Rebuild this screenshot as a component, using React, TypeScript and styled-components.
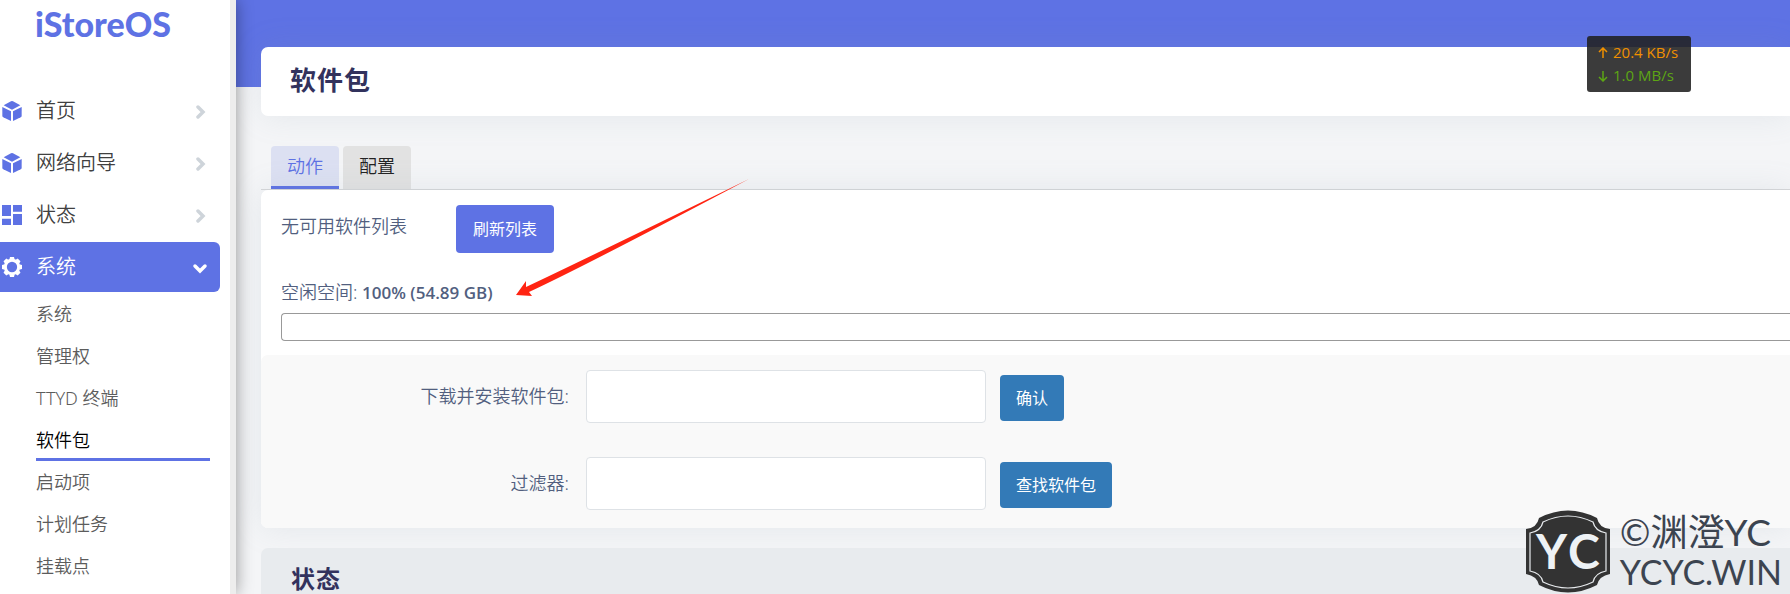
import React from "react";
import styled, { createGlobalStyle } from "styled-components";

const primary = "#5e72e4";

const GlobalStyle = createGlobalStyle`
  *, *::before, *::after { box-sizing: border-box; }
  body {
    margin: 0;
    background: #f4f5f7;
    color: #525f7f;
    font-family: "Noto Sans", "Noto Sans CJK SC", sans-serif;
    font-size: 18px;
    font-weight: 350;
    line-height: 24px;
  }
  h1, h2, p, ul { margin: 0; padding: 0; }
  ul { list-style: none; }
  a { color: inherit; text-decoration: none; }
  button, input { font: inherit; }
`;

const Page = styled.div`
  position: relative;
  display: flex;
  height: 100vh;
  overflow: hidden;
`;

const Sidebar = styled.aside`
  position: relative;
  z-index: 1;
  flex: 0 0 236px;
  padding-right: 10px;
  background: #fff;
  border-right: 6px solid #ededed;
  box-shadow: 0 0 16px rgba(0, 0, 0, 0.4);
`;

const Brand = styled.a`
  display: block;
  height: 86px;
  padding: 4px 0 0 35px;
  color: ${primary};
  font-family: Lato, sans-serif;
  font-size: 34px;
  font-weight: 900;
  line-height: 40px;
`;

const Menu = styled.ul`
  display: flex;
  flex-direction: column;
  gap: 2px;
`;

const MenuLink = styled.a<{ $active?: boolean }>`
  display: flex;
  align-items: center;
  height: 50px;
  padding: 0 12px 0 2px;
  border-radius: 0 6px 6px 0;
  background: ${(p) => (p.$active ? primary : "transparent")};
  color: ${(p) => (p.$active ? "#fff" : "#404040")};
  font-size: 20px;

  > svg:first-child {
    margin-right: 14px;
    color: ${(p) => (p.$active ? "#fff" : primary)};
  }
  > svg:last-child {
    margin-left: auto;
    color: ${(p) => (p.$active ? "#fff" : "#ced4da")};
  }
`;

const SubMenu = styled.ul`
  padding: 1px 10px 0 36px;
`;

const SubLink = styled.a<{ $active?: boolean }>`
  display: block;
  height: 42px;
  padding-top: 9px;
  border-bottom: 3px solid ${(p) => (p.$active ? primary : "transparent")};
  color: ${(p) => (p.$active ? "#000" : "#5c5c5c")};
`;

const Main = styled.main`
  flex: 1;
  min-width: 0;
  display: flex;
  flex-direction: column;
  padding: 47px 0 0 25px;
  background: linear-gradient(${primary} 87px, #f4f5f7 87px);

  > * { flex-shrink: 0; }
`;

const TitleCard = styled.header`
  height: 69px;
  padding: 16px 29px;
  border-radius: 7px 0 0 7px;
  background: #fff;
  box-shadow: 0 0 32px rgba(136, 152, 170, 0.15);
`;

const Title = styled.h1`
  color: #32325d;
  font-size: 26px;
  font-weight: 700;
  line-height: 34px;
  letter-spacing: 1px;
`;

const Tabs = styled.ul`
  display: flex;
  gap: 4px;
  margin-top: 30px;
  padding-left: 10px;
  border-bottom: 1px solid #d6d7d9;
`;

const TabLink = styled.a<{ $active?: boolean }>`
  display: block;
  height: 43px;
  padding: 8px 16px 0;
  border-radius: 4px 4px 0 0;
  border-bottom: 3px solid ${(p) => (p.$active ? primary : "#e2e2e2")};
  background: ${(p) => (p.$active ? "#dce0f2" : "#e2e2e2")};
  color: ${(p) => (p.$active ? primary : "#222")};
`;

const Panel = styled.section`
  border-radius: 7px 0 0 7px;
  background: #fff;
  box-shadow: 0 0 32px rgba(136, 152, 170, 0.15);
`;

const Overview = styled.div`
  padding: 15px 0 14px 20px;
`;

const ListRow = styled.div`
  display: flex;
  gap: 49px;
  margin-bottom: 27px;

  p { padding-top: 9px; }
`;

const Button = styled.button<{ $tone?: "primary" | "info" }>`
  height: ${(p) => (p.$tone === "info" ? 46 : 48)}px;
  padding: 0 ${(p) => (p.$tone === "info" ? 16 : 17)}px;
  border: 0;
  border-radius: 4px;
  background: ${(p) => (p.$tone === "info" ? "#337ab7" : primary)};
  color: #fff;
  font-size: 16px;
  font-weight: 400;
`;

const FreeSpace = styled.p`
  margin-bottom: 8px;

  strong {
    font-family: "Open Sans", sans-serif;
    font-size: 17px;
    font-weight: 600;
  }
`;

const Meter = styled.div`
  height: 28px;
  border: 1px solid #999;
  border-right: 0;
  border-radius: 4px 0 0 4px;
`;

const Form = styled.form`
  display: grid;
  gap: 34px;
  padding: 15px 0 18px;
  border-radius: 7px 0 0 7px;
  background: #f9f9f9;
`;

const Field = styled.div`
  display: grid;
  grid-template-columns: 308px 400px auto;
  justify-content: start;
  align-items: center;

  label {
    padding-bottom: 2px;
    text-align: right;
  }
  input {
    width: 400px;
    height: 53px;
    margin-left: 17px;
    padding: 0 12px;
    border: 1px solid #dee2e6;
    border-radius: 4px;
    background: #fff;
    color: inherit;
  }
  ${Button} {
    margin: 3px 0 0 31px;
  }
`;

const StatusSection = styled.section`
  flex-grow: 1;
  margin-top: 20px;
  padding: 17px 30px 0;
  border-radius: 7px 0 0 0;
  background: #e8ebee;

  h2 {
    color: #32325d;
    font-size: 24px;
    font-weight: 700;
    line-height: 28px;
    letter-spacing: 1px;
  }
`;

const SpeedBox = styled.div`
  position: absolute;
  z-index: 2;
  top: 36px;
  right: 99px;
  width: 104px;
  padding: 5px 10px;
  border-radius: 3px;
  background: rgba(32, 32, 32, 0.88);
  font-family: "Open Sans", sans-serif;
  font-size: 15px;
  font-weight: 400;
  line-height: 23px;
`;

const Speed = styled.div<{ $color: string }>`
  display: flex;
  align-items: center;
  gap: 4px;
  color: ${(p) => p.$color};
  white-space: nowrap;
`;

const Pointer = styled.svg`
  position: absolute;
  z-index: 2;
  top: 178px;
  left: 515px;
  pointer-events: none;
`;

const Watermark = styled.div`
  position: absolute;
  z-index: 2;
  right: 8px;
  bottom: 0;
  display: flex;
  align-items: center;
  gap: 9px;
  color: #3c4450;
  font-family: Lato, "Noto Sans CJK SC", sans-serif;
  font-size: 34px;
  font-weight: 400;
  line-height: 40px;
  white-space: nowrap;
`;

const WatermarkOwner = styled.div`
  font-size: 37px;
`;

const CubeIcon = () => (
  <svg width="20" height="20" viewBox="0 0 60 60" fill="currentColor" aria-hidden="true">
    <path d="M27 1Q30 -1 33 1L55 13 30 26 5 13Z" />
    <path d="M1 18 27 31V60L4 49Q1 47 1 44Z" />
    <path d="M59 18 33 31V60L56 49Q59 47 59 44Z" />
  </svg>
);

const BlocksIcon = () => (
  <svg width="20" height="20" viewBox="0 0 60 60" fill="currentColor" aria-hidden="true">
    <path d="M0 0H27V33H0ZM0 41H27V60H0ZM33 0H60V20H33ZM33 27H60V60H33Z" />
  </svg>
);

const GearIcon = () => (
  <svg width="20" height="20" viewBox="-30 -30 60 60" aria-hidden="true">
    <circle r="20" fill="none" stroke="currentColor" strokeWidth="9" />
    {[0, 45, 90, 135, 180, 225, 270, 315].map((angle) => (
      <path key={angle} d="M-8 -22 -6 -30H6L8 -22Z" fill="currentColor" transform={`rotate(${angle})`} />
    ))}
  </svg>
);

const Chevron = ({ open }: { open?: boolean }) => (
  <svg width="16" height="16" viewBox="0 0 16 16" fill="none" stroke="currentColor" strokeWidth="3.500" aria-hidden="true">
    <path d={open ? "M3 7 8 12 13 7" : "M6 4 11 9 6 14"} strokeLinecap="round" />
  </svg>
);

const SpeedArrow = ({ down }: { down?: boolean }) => (
  <svg width="12" height="12" viewBox="0 0 12 12" fill="none" stroke="currentColor" strokeWidth="1.500" aria-hidden="true">
    <path d={down ? "M6 1V11M2 7 6 11 10 7" : "M6 11V1M2 5 6 1 10 5"} />
  </svg>
);

const Emblem = () => (
  <svg width="86" height="84" viewBox="0 0 86 84" aria-hidden="true">
    <path
      d="M1 19Q12 18 14 8Q43 -7 72 8Q74 18 85 19V64Q74 66 72 75Q43 90 14 75Q12 66 1 64Z"
      fill="#333"
    />
    <path
      d="M5 23Q16 21 18 12Q43 0 68 12Q70 21 81 23V61Q70 63 68 72Q43 84 18 72Q16 63 5 61Z"
      fill="none"
      stroke="#e8ebee"
      strokeWidth="1.200"
    />
    <g fill="#eef2f5" fontFamily="Lato, sans-serif" fontSize="48" fontWeight="700">
      <text x="11" y="59">Y</text>
      <text x="43" y="59">C</text>
    </g>
  </svg>
);

const menuItems = [
  { label: "首页", icon: <CubeIcon /> },
  { label: "网络向导", icon: <CubeIcon /> },
  { label: "状态", icon: <BlocksIcon /> },
  { label: "系统", icon: <GearIcon />, active: true },
];

const subItems = ["系统", "管理权", "TTYD 终端", "软件包", "启动项", "计划任务", "挂载点"];

const fields = [
  { id: "install", label: "下载并安装软件包:", action: "确认" },
  { id: "filter", label: "过滤器:", action: "查找软件包" },
];

export default function App() {
  return (
    <>
      <GlobalStyle />
      <Page>
        <Sidebar>
          <Brand href="#">iStoreOS</Brand>
          <nav>
            <Menu>
              {menuItems.map((item) => (
                <li key={item.label}>
                  <MenuLink href="#" $active={item.active}>
                    {item.icon}
                    {item.label}
                    <Chevron open={item.active} />
                  </MenuLink>
                </li>
              ))}
            </Menu>
            <SubMenu>
              {subItems.map((label) => (
                <li key={label}>
                  <SubLink href="#" $active={label === "软件包"}>
                    {label}
                  </SubLink>
                </li>
              ))}
            </SubMenu>
          </nav>
        </Sidebar>

        <Main>
          <TitleCard>
            <Title>软件包</Title>
          </TitleCard>

          <Tabs>
            <li>
              <TabLink href="#" $active>
                动作
              </TabLink>
            </li>
            <li>
              <TabLink href="#">配置</TabLink>
            </li>
          </Tabs>

          <Panel>
            <Overview>
              <ListRow>
                <p>无可用软件列表</p>
                <Button type="button">刷新列表</Button>
              </ListRow>
              <FreeSpace>
                空闲空间: <strong>100% (54.89 GB)</strong>
              </FreeSpace>
              <Meter />
            </Overview>
            <Form>
              {fields.map((field) => (
                <Field key={field.id}>
                  <label htmlFor={field.id}>{field.label}</label>
                  <input id={field.id} type="text" />
                  <Button type="button" $tone="info">
                    {field.action}
                  </Button>
                </Field>
              ))}
            </Form>
          </Panel>

          <StatusSection>
            <h2>状态</h2>
          </StatusSection>
        </Main>

        <SpeedBox>
          <Speed $color="#f09000">
            <SpeedArrow />
            20.4 KB/s
          </Speed>
          <Speed $color="#5da614">
            <SpeedArrow down />
            1.0 MB/s
          </Speed>
        </SpeedBox>

        <Pointer width="236" height="120" viewBox="0 0 236 120" aria-hidden="true">
          <path d="M1 117 11 103 11 109Q60 86 234 1Q70 88 14 114L17 118Z" fill="#ff2412" />
        </Pointer>

        <Watermark>
          <Emblem />
          <div>
            <WatermarkOwner>©渊澄YC</WatermarkOwner>
            <div>YCYC.WIN</div>
          </div>
        </Watermark>
      </Page>
    </>
  );
}
